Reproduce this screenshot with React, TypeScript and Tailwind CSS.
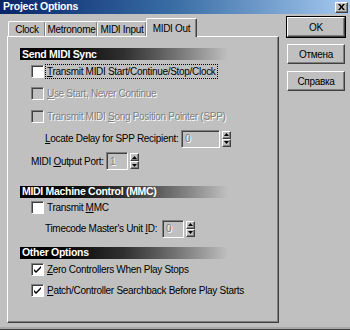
import React from 'react';

const raised =
  'border border-t-white border-l-white border-r-[#404040] border-b-[#404040] shadow-[inset_-1px_-1px_0_#808080]';

function Check({ checked = false, disabled = false }: { checked?: boolean; disabled?: boolean }) {
  return (
    <div
      className={`flex h-[13px] w-[13px] shrink-0 items-center justify-center border border-t-[#808080] border-l-[#808080] border-r-white border-b-white shadow-[inset_1px_1px_0_#404040] ${
        disabled ? 'bg-[#c0c0c0]' : 'bg-white'
      }`}
    >
      {checked && (
        <svg width="9" height="9" viewBox="0 0 9 9">
          <path d="M1 4 L3 6 L8 1 L8 3 L3 8 L1 6 Z" fill="#000" />
        </svg>
      )}
    </div>
  );
}

function Spin({ value, width }: { value: string; width: string }) {
  return (
    <div className="flex items-center gap-[2px]">
      <div
        className={`flex h-[18px] ${width} items-center border border-t-[#808080] border-l-[#808080] border-r-white border-b-white bg-[#c0c0c0] pl-[3px] text-[#808080] shadow-[inset_1px_1px_0_#404040] [text-shadow:1px_1px_0_#fff]`}
      >
        {value}
      </div>
      <div className="flex flex-col">
        <div className={`flex h-[8px] w-[9px] items-center justify-center bg-[#c0c0c0] ${raised}`}>
          <svg width="5" height="3" viewBox="0 0 5 3">
            <path d="M0 3 L2.5 0 L5 3 Z" fill="#000" />
          </svg>
        </div>
        <div className={`flex h-[8px] w-[9px] items-center justify-center bg-[#c0c0c0] ${raised}`}>
          <svg width="5" height="3" viewBox="0 0 5 3">
            <path d="M0 0 L5 0 L2.5 3 Z" fill="#000" />
          </svg>
        </div>
      </div>
    </div>
  );
}

function Header({ children }: { children: React.ReactNode }) {
  return (
    <div className="flex h-[12px] w-[208px] items-center whitespace-nowrap bg-gradient-to-r from-black via-[#303030] to-[#c0c0c0] pl-[2px] text-[10.5px] font-bold leading-none tracking-[-0.3px] text-white">
      {children}
    </div>
  );
}

function U({ children }: { children: React.ReactNode }) {
  return <span className="underline underline-offset-[1px]">{children}</span>;
}

const dis = 'text-[#808080] [text-shadow:1px_1px_0_#fff]';

export default function App() {
  return (
    <div
      className="relative h-[330px] w-[350px] overflow-hidden whitespace-nowrap bg-[#c0c0c0] text-[10px] tracking-[-0.3px] text-black"
      style={{ fontFamily: '"Liberation Sans", Arial, sans-serif' }}
    >
      <div className="flex h-[14px] items-center justify-between bg-gradient-to-r from-[#0a246a] via-[#3a6ea5] to-[#a6caf0] pl-[3px] pr-[2px]">
        <span className="text-[10.5px] font-bold tracking-[-0.2px] text-white">Project Options</span>
        <div className={`flex h-[11px] w-[13px] items-center justify-center bg-[#c0c0c0] ${raised}`}>
          <svg width="7" height="6" viewBox="0 0 7 6">
            <path d="M0 0 L2 0 L3.5 2 L5 0 L7 0 L4.5 3 L7 6 L5 6 L3.5 4 L2 6 L0 6 L2.5 3 Z" fill="#000" />
          </svg>
        </div>
      </div>

      <div className="flex pl-[7px] pt-[3px]">
        <div className="flex w-[272px] flex-col">
          <div className="flex h-[19px] items-end pl-[1px]">
            {[
              ['Clock', 'w-[38px]'],
              ['Metronome', 'w-[53px]'],
              ['MIDI Input', 'w-[50px]'],
            ].map(([t, w]) => (
              <div
                key={t}
                className={`-mr-[1px] flex h-[15px] ${w} items-center justify-center rounded-t-[2px] border border-b-0 border-t-white border-l-white border-r-[#404040] shadow-[inset_-1px_0_0_#808080]`}
              >
                {t}
              </div>
            ))}
            <div className="relative z-10 -mb-[1px] flex h-[19px] w-[51px] items-center justify-center rounded-t-[2px] border border-b-0 border-t-white border-l-white border-r-[#404040] bg-[#c0c0c0] shadow-[inset_-1px_0_0_#808080]">
              MIDI Out
            </div>
          </div>

          <div className={`flex h-[287px] flex-col pl-[12px] pt-[11px] ${raised}`}>
            <Header>Send MIDI Sync</Header>
            <div className="flex flex-col pl-[11px]">
              <div className="flex h-[22.5px] items-center gap-[2px]">
                <Check />
                <span className="px-[1px] leading-[13px] outline-1 outline-dotted outline-black">
                  <U>T</U>ransmit MIDI Start/Continue/Stop/Clock
                </span>
              </div>
              <div className={`flex h-[22.5px] items-center gap-[3px] ${dis}`}>
                <Check disabled />
                <span>
                  <U>U</U>se Start, Never Continue
                </span>
              </div>
              <div className={`flex h-[22.5px] items-center gap-[3px] ${dis}`}>
                <Check disabled />
                <span>
                  Transmit MIDI <U>S</U>ong Position Pointer (SPP)
                </span>
              </div>
              <div className="flex h-[22.5px] items-center pl-[14px]">
                <span className="w-[136px]">
                  <U>L</U>ocate Delay for SPP Recipient:
                </span>
                <Spin value="0" width="w-[39px]" />
              </div>
              <div className="flex h-[22.5px] items-center">
                <span className="w-[75px]">
                  MIDI <U>O</U>utput Port:
                </span>
                <Spin value="1" width="w-[22px]" />
              </div>
            </div>

            <div className="mt-[13px]">
              <Header>MIDI Machine Control (MMC)</Header>
            </div>
            <div className="flex flex-col pl-[11px]">
              <div className="flex h-[19px] items-center gap-[3px]">
                <Check />
                <span>
                  Transmit <U>M</U>MC
                </span>
              </div>
              <div className="flex h-[24px] items-center pl-[14px]">
                <span className="w-[117px]">
                  Timecode Master's Unit <U>I</U>D:
                </span>
                <Spin value="0" width="w-[22px]" />
              </div>
            </div>

            <div className="mt-[6px]">
              <Header>Other Options</Header>
            </div>
            <div className="flex flex-col pl-[11px]">
              <div className="flex h-[21px] items-center gap-[3px]">
                <Check checked />
                <span>
                  <U>Z</U>ero Controllers When Play Stops
                </span>
              </div>
              <div className="flex h-[22px] items-center gap-[3px]">
                <Check checked />
                <span>
                  <U>P</U>atch/Controller Searchback Before Play Starts
                </span>
              </div>
            </div>
          </div>
        </div>

        <div className="ml-[8px] flex flex-col gap-[7px] pt-0">
          {['OK', 'Отмена', 'Справка'].map((b, i) => (
            <div
              key={b}
              className={`flex h-[20px] w-[58px] items-center justify-center bg-[#c0c0c0] ${
                i === 0 ? 'outline outline-1 outline-black ' : ''
              }${raised}`}
            >
              {b}
            </div>
          ))}
        </div>
      </div>

      <div className="absolute bottom-0 left-0 h-[3px] w-full border-b border-[#404040] bg-[#a8a8a8]" />
    </div>
  );
}
